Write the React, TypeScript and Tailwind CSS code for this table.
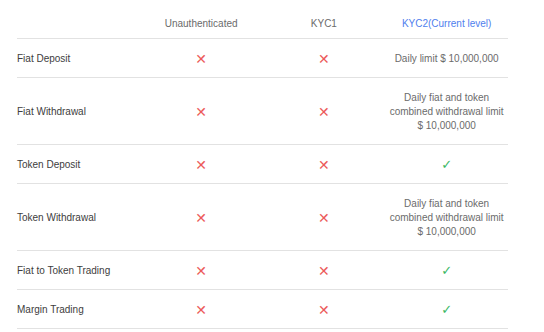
const Cross = () => (
  <span className="text-[#ec5b5b] text-[14px] leading-[14px] font-['DejaVu_Sans',sans-serif]">✕</span>
);
const Check = () => (
  <span className="text-[#3cb864] text-[13px] leading-[14px] font-bold font-['DejaVu_Sans',sans-serif]">✓</span>
);

const limit = ["Daily fiat and token", "combined withdrawal limit", "$ 10,000,000"];

const rows: { label: string; c: string[] | "check" }[] = [
  { label: "Fiat Deposit", c: ["Daily limit $ 10,000,000"] },
  { label: "Fiat Withdrawal", c: limit },
  { label: "Token Deposit", c: "check" },
  { label: "Token Withdrawal", c: limit },
  { label: "Fiat to Token Trading", c: "check" },
  { label: "Margin Trading", c: "check" },
];

export default function App() {
  return (
    <div className="w-[544px] h-[332px] bg-white pl-[17px] pr-[36px] pt-[17px] font-['Liberation_Sans',Arial,sans-serif] text-[10px] leading-[14px]">
      <div className="grid grid-cols-4 pb-[7px] border-b border-[#e2e2e2] text-[#6b6b6b]">
        <div />
        <div className="text-center">Unauthenticated</div>
        <div className="text-center">KYC1</div>
        <div className="text-center text-[#4f80ee]">KYC2(Current level)</div>
      </div>
      {rows.map((r) => (
        <div
          key={r.label}
          className="grid grid-cols-4 items-center pt-[13px] pb-[11px] border-b border-[#e2e2e2]"
        >
          <div className="text-[#3d3d3d]">{r.label}</div>
          <div className="flex justify-center">
            <Cross />
          </div>
          <div className="flex justify-center">
            <Cross />
          </div>
          <div className="flex flex-col items-center text-center text-[#6b6b6b]">
            {r.c === "check" ? <Check /> : r.c.map((t) => <span key={t}>{t}</span>)}
          </div>
        </div>
      ))}
    </div>
  );
}
